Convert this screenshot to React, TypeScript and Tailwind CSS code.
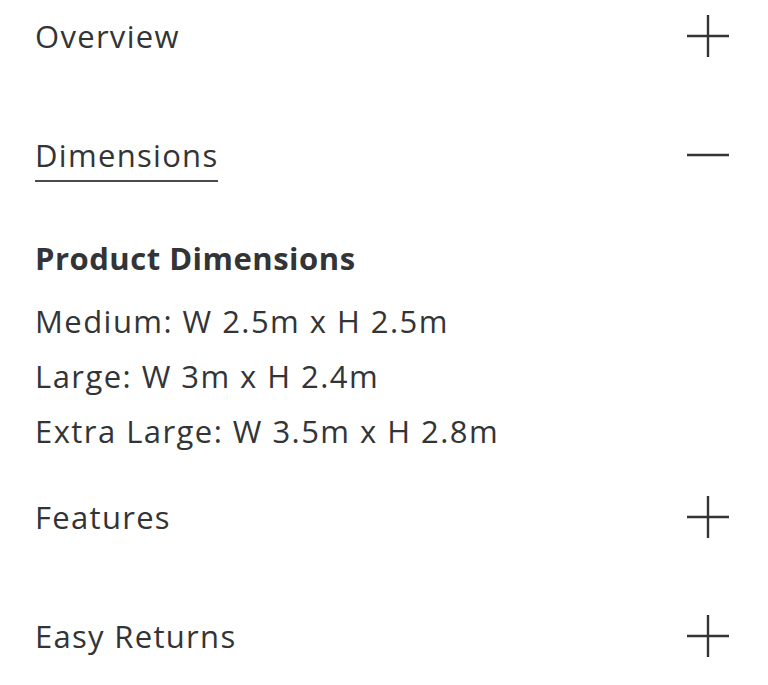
import { useState } from 'react';

type Section = { id: string; title: string };

const sections: Section[] = [
  { id: 'overview', title: 'Overview' },
  { id: 'dimensions', title: 'Dimensions' },
  { id: 'features', title: 'Features' },
  { id: 'returns', title: 'Easy Returns' },
];

const sizes = [
  'Medium: W 2.5m x H 2.5m',
  'Large: W 3m x H 2.4m',
  'Extra Large: W 3.5m x H 2.8m',
];

function PlusMinus({ open }: { open: boolean }) {
  return (
    <svg width="44" height="44" viewBox="0 0 44 44" className="text-[#333436]">
      <line x1="1" y1="22" x2="43" y2="22" stroke="currentColor" strokeWidth="2.4" />
      {!open && <line x1="22" y1="1" x2="22" y2="43" stroke="currentColor" strokeWidth="2.4" />}
    </svg>
  );
}

export default function App() {
  const [openId, setOpenId] = useState<string | null>('dimensions');

  return (
    <div
      className="min-h-screen bg-white pl-[35px] pr-[38px] text-[#333436]"
      style={{ fontFamily: '"Open Sans", Lato, sans-serif' }}
    >
      {sections.map(s => {
        const open = openId === s.id;
        return (
          <div key={s.id} className={open ? 'mb-[22px]' : 'mb-[47px]'}>
            <button
              onClick={() => setOpenId(open ? null : s.id)}
              className="flex h-[72px] w-full items-center justify-between text-left"
            >
              <span
                className={`text-[31px] leading-[40px] tracking-[1.3px] ${open ? 'border-b-2 border-[#4a4b4c] pb-[5px] mt-[6px]' : ''}`}
              >
                {s.title}
              </span>
              <PlusMinus open={open} />
            </button>
            {open && s.id === 'dimensions' && (
              <div className="pt-[40px] text-[31px] leading-[55px] tracking-[1.45px]">
                <div className="mb-[8px] font-bold tracking-[0.5px]">Product Dimensions</div>
                {sizes.map(line => (
                  <div key={line}>{line}</div>
                ))}
              </div>
            )}
          </div>
        );
      })}
    </div>
  );
}
